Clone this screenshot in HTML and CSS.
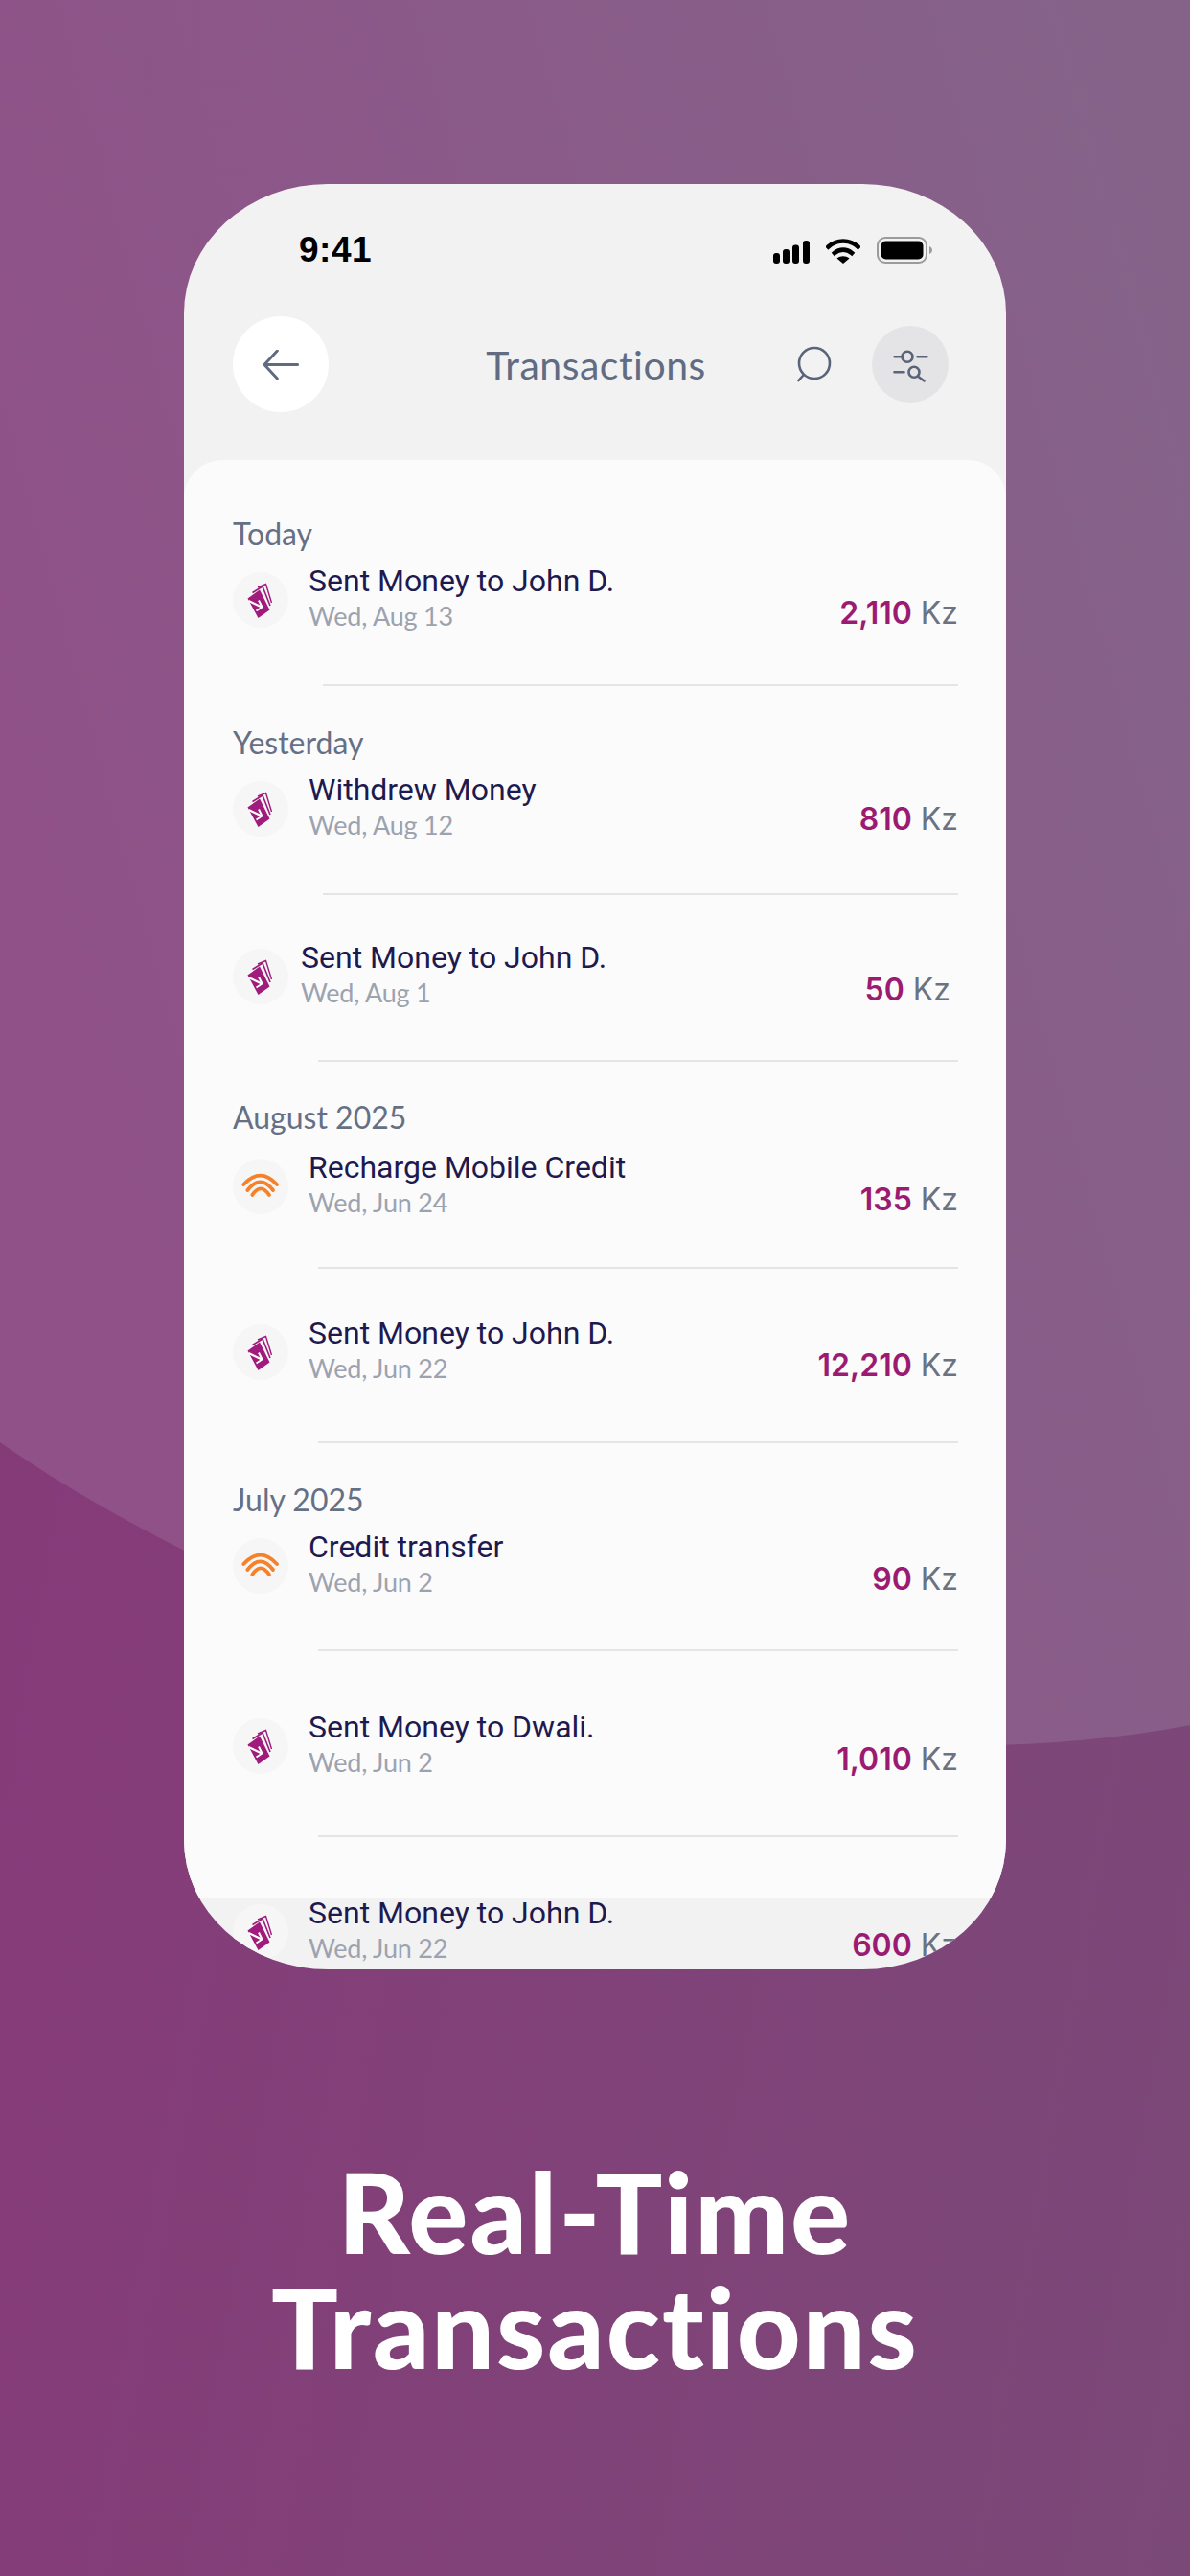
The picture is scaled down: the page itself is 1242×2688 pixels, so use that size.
FILE: index.html
```html
<!DOCTYPE html>
<html lang="en">
  <head>
    <meta charset="UTF-8" />
    <meta name="viewport" content="width=device-width, initial-scale=1.0" />
    <title>Real-Time Transactions</title>
    <link rel="stylesheet" href="styles.css">
  </head>
  <body>
    <svg class="backdrop" viewBox="0 0 1242 2688" aria-hidden="true">
      <defs>
        <linearGradient id="lightWash" x1="0" y1="0.6" x2="1" y2="0.2">
          <stop offset="0" stop-color="#905088" />
          <stop offset="1" stop-color="#856389" />
        </linearGradient>
      </defs>
      <path d="M0 0H1242V1800C800 1885 280 1700 0 1505Z" fill="url(#lightWash)" />
    </svg>

    <svg class="sprites" aria-hidden="true">
      <symbol id="money" viewBox="0 0 58 58">
        <polygon points="15.500,27.500 28,18.500 38.500,39.500 26.500,48" fill="#a01c7c" />
        <polyline points="20.500,21.500 31,15 39,35" fill="none" stroke="#a01c7c" stroke-width="1.6" />
        <polyline points="26,16 34.500,12.500 40.500,32" fill="none" stroke="#a01c7c" stroke-width="1.4" />
        <polyline points="16.500,30 30,36.500" fill="none" stroke="#fff" stroke-width="2" />
        <polyline points="27,29.500 30.500,36.500 24.500,40.500" fill="none" stroke="#fff" stroke-width="2" />
      </symbol>
      <symbol id="signal" viewBox="0 0 58 58">
        <g fill="none" stroke="#f5822a" stroke-width="3.800" stroke-linecap="round">
          <path d="M11.300 27Q28.700 8.400 46 27" />
          <path d="M15.300 33Q28.700 15.600 42 33" />
          <path d="M20.300 38Q29 24.600 38 38" />
        </g>
      </symbol>
    </svg>

    <main class="phone">
      <div class="status-bar">
        <span class="clock">9:41</span>
        <div class="status-icons">
          <svg class="icon-cell" viewBox="0 0 38 24">
            <rect x="0" y="13" width="7" height="11" rx="3" />
            <rect x="10" y="9" width="7" height="15" rx="3" />
            <rect x="20" y="4.500" width="7" height="19.500" rx="3" />
            <rect x="31" y="0" width="7" height="24" rx="3" />
          </svg>
          <svg class="icon-wifi" viewBox="0 0 36 27">
            <path d="M2.500 9.500C11 1.500 25 1.500 33.500 9.500" fill="none" stroke="#000" stroke-width="4.600" stroke-linecap="square" />
            <path d="M9 16C14 11.500 22 11.500 27 16" fill="none" stroke="#000" stroke-width="4.600" stroke-linecap="square" />
            <path d="M11.500 21.500L18 27L24.500 21.500C20.500 18.400 15.500 18.400 11.500 21.500Z" />
          </svg>
          <svg class="icon-battery" viewBox="0 0 58 28">
            <rect x="1" y="1" width="51" height="26" rx="8" fill="none" stroke="#9b9b9b" stroke-width="2" />
            <rect x="4.500" y="4.500" width="44" height="19" rx="5" />
            <path d="M55 10C57 11 58 12.500 58 14C58 15.500 57 17 55 18Z" fill="#9b9b9b" />
          </svg>
        </div>
      </div>

      <header class="top-bar">
        <button class="back-btn" aria-label="Back">
          <svg viewBox="0 0 36 30" class="back-arrow">
            <path d="M35 15H2M14.500 1L1.500 15L14.500 29" />
          </svg>
        </button>
        <h1 class="page-title">Transactions</h1>
        <div class="top-actions">
          <svg viewBox="0 0 60 60" class="action-icon">
            <circle cx="30" cy="29" r="16" />
            <path d="M18 42L13.500 47" />
          </svg>
          <div class="filter-btn">
            <svg viewBox="0 0 60 60" class="action-icon">
              <path d="M13.500 22.300H21M37.500 22.300H47.500M13.500 38.300H23.500" />
              <circle cx="27" cy="22.300" r="5.500" />
              <circle cx="34" cy="38.300" r="5.500" />
              <path d="M38.500 43L44.500 47.500" />
            </svg>
          </div>
        </div>
      </header>

      <section class="sheet">
        <h2 class="day day-first">Today</h2>
        <div class="row row-first">
          <svg class="tx-icon"><use href="#money" /></svg>
          <div class="tx-text">
            <div class="tx-name">Sent Money to John D.</div>
            <div class="tx-date">Wed, Aug 13</div>
          </div>
          <div class="tx-amount"><b>2,110</b> Kz</div>
        </div>
        <div class="divider"></div>

        <h2 class="day">Yesterday</h2>
        <div class="row row-first">
          <svg class="tx-icon"><use href="#money" /></svg>
          <div class="tx-text">
            <div class="tx-name">Withdrew Money</div>
            <div class="tx-date">Wed, Aug 12</div>
          </div>
          <div class="tx-amount tx-amount-high"><b>810</b> Kz</div>
        </div>
        <div class="divider"></div>

        <div class="row row-inset">
          <svg class="tx-icon"><use href="#money" /></svg>
          <div class="tx-text">
            <div class="tx-name">Sent Money to John D.</div>
            <div class="tx-date">Wed, Aug 1</div>
          </div>
          <div class="tx-amount"><b>50</b> Kz</div>
        </div>
        <div class="divider divider-long"></div>

        <h2 class="day day-tight">August 2025</h2>
        <div class="row row-first row-loose">
          <svg class="tx-icon"><use href="#signal" /></svg>
          <div class="tx-text">
            <div class="tx-name">Recharge Mobile Credit</div>
            <div class="tx-date">Wed, Jun 24</div>
          </div>
          <div class="tx-amount"><b>135</b> Kz</div>
        </div>
        <div class="divider divider-long divider-near"></div>

        <div class="row">
          <svg class="tx-icon"><use href="#money" /></svg>
          <div class="tx-text">
            <div class="tx-name">Sent Money to John D.</div>
            <div class="tx-date">Wed, Jun 22</div>
          </div>
          <div class="tx-amount"><b>12,210</b> Kz</div>
        </div>
        <div class="divider divider-long divider-far"></div>

        <h2 class="day">July 2025</h2>
        <div class="row row-first">
          <svg class="tx-icon"><use href="#signal" /></svg>
          <div class="tx-text">
            <div class="tx-name">Credit transfer</div>
            <div class="tx-date">Wed, Jun 2</div>
          </div>
          <div class="tx-amount"><b>90</b> Kz</div>
        </div>
        <div class="divider divider-long"></div>

        <div class="row row-wide">
          <svg class="tx-icon"><use href="#money" /></svg>
          <div class="tx-text">
            <div class="tx-name">Sent Money to Dwali.</div>
            <div class="tx-date">Wed, Jun 2</div>
          </div>
          <div class="tx-amount"><b>1,010</b> Kz</div>
        </div>
        <div class="divider divider-long divider-far"></div>

        <div class="row row-wide">
          <svg class="tx-icon"><use href="#money" /></svg>
          <div class="tx-text">
            <div class="tx-name">Sent Money to John D.</div>
            <div class="tx-date">Wed, Jun 22</div>
          </div>
          <div class="tx-amount"><b>600</b> Kz</div>
        </div>
      </section>
    </main>

    <h1 class="headline">Real-Time<br>Transactions</h1>
  </body>
</html>
```

FILE: styles.css
```css
html, body {
  margin: 0;
  height: 2688px;
}

body {
  position: relative;
  overflow: hidden;
  padding-top: 192px;
  box-sizing: border-box;
  background: linear-gradient(100deg, #883879, #7b4978);
  font-family: 'Roboto', sans-serif;
}

.backdrop {
  position: absolute;
  top: 0;
  left: 0;
  width: 1242px;
  height: 2688px;
}

.sprites {
  position: absolute;
  width: 0;
  height: 0;
}

.phone {
  position: relative;
  width: 858px;
  height: 1863px;
  margin: 0 auto;
  background: #f2f2f3;
  border-radius: 150px / 135px;
  overflow: hidden;
}

.status-bar {
  height: 138px;
  display: flex;
  align-items: center;
  justify-content: space-between;
  padding: 0 77px 0 120px;
  box-sizing: border-box;
}

.clock {
  font-family: 'Liberation Sans', sans-serif;
  font-weight: 700;
  font-size: 37px;
  letter-spacing: 0.5px;
  color: #000;
}

.status-icons {
  display: flex;
  align-items: center;
  gap: 17px;
}

.icon-cell {
  width: 38px;
  height: 24px;
  margin-top: 3px;
}

.icon-wifi {
  width: 36px;
  height: 27px;
}

.icon-battery {
  width: 58px;
  height: 28px;
}

.top-bar {
  height: 100px;
  display: grid;
  grid-template-columns: 1fr auto 1fr;
  align-items: center;
  padding: 0 60px 0 51px;
}

.back-btn {
  width: 100px;
  height: 100px;
  padding: 0;
  border: none;
  border-radius: 50%;
  background: #fff;
  display: flex;
  align-items: center;
  justify-content: center;
}

.back-arrow {
  width: 38px;
  height: 31px;
  fill: none;
  stroke: #5f6b80;
  stroke-width: 2.8;
  stroke-linecap: round;
  stroke-linejoin: round;
}

.page-title {
  margin: 0 0 0 11px;
  font-family: 'Lato', sans-serif;
  font-weight: 400;
  font-size: 41px;
  letter-spacing: 0.5px;
  font-variant-ligatures: none;
  color: #616b82;
}

.top-actions {
  display: flex;
  align-items: center;
  justify-content: flex-end;
  gap: 30px;
}

.action-icon {
  width: 60px;
  height: 60px;
  fill: none;
  stroke: #5a6478;
  stroke-width: 2.6;
  stroke-linecap: round;
}

.filter-btn {
  width: 80px;
  height: 80px;
  border-radius: 50%;
  background: #e4e4e6;
  display: flex;
  align-items: center;
  justify-content: center;
}

.sheet {
  margin-top: 50px;
  padding: 0 50px 0 51px;
  height: 1500px;
  background: #fbfbfc;
  border-radius: 40px 40px 0 0;
}

.day {
  margin: 39px 0 0;
  font-family: 'Lato', sans-serif;
  font-weight: 400;
  font-size: 32px;
  line-height: 40px;
  color: #667085;
}

.day-first {
  padding-top: 57px;
  margin-top: 0;
}

.day-tight {
  margin-top: 38px;
}

.row {
  display: flex;
  align-items: center;
  padding-top: 48px;
}

.row-first {
  padding-top: 10px;
}

.row-loose {
  padding-top: 13px;
}

.row-inset {
  padding-top: 46px;
}

.row-wide {
  padding-top: 60px;
}

.tx-icon {
  flex: none;
  width: 58px;
  height: 58px;
  margin-top: 4px;
  margin-right: 21px;
  border-radius: 50%;
  background: #f6f6f6;
}

.row-inset .tx-icon {
  margin-right: 13px;
}

.tx-text {
  flex: 1;
}

.tx-name {
  font-size: 32px;
  line-height: 38px;
  color: #1d1a4f;
}

.tx-date {
  font-family: 'Lato', sans-serif;
  font-size: 27px;
  line-height: 36px;
  letter-spacing: -0.2px;
  color: #9ca3af;
}

.tx-amount {
  align-self: flex-end;
  margin-bottom: 1px;
  font-family: 'Inter', sans-serif;
  font-size: 32px;
  line-height: 40px;
  color: #6b7280;
}

.tx-amount b {
  font-weight: 600;
  color: #9b1b72;
}

.tx-amount-high {
  margin-bottom: 4px;
}

.row-inset .tx-amount {
  margin-right: 8px;
}

.divider {
  height: 2px;
  margin: 53px 0 0 94px;
  background: #e5e5e7;
}

.divider-long {
  margin-left: 89px;
  margin-top: 52px;
}

.divider-near {
  margin-top: 49px;
}

.divider-far {
  margin-top: 58px;
}

.headline {
  position: relative;
  margin: 193px 0 0;
  font-family: 'Lato', sans-serif;
  font-weight: 900;
  font-size: 116px;
  line-height: 120px;
  letter-spacing: 2px;
  font-variant-ligatures: none;
  text-align: center;
  color: #fff;
}
```
